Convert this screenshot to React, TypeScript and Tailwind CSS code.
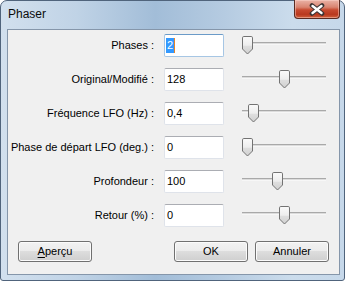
import React from "react";

const rows = [
  { label: "Phases :", value: "2", pos: 0, focused: true },
  { label: "Original/Modifié :", value: "128", pos: 37 },
  { label: "Fréquence LFO (Hz) :", value: "0,4", pos: 6 },
  { label: "Phase de départ LFO (deg.) :", value: "0", pos: 0 },
  { label: "Profondeur :", value: "100", pos: 30 },
  { label: "Retour (%) :", value: "0", pos: 37 },
];

function Thumb({ id }: { id: string }) {
  return (
    <svg width="11" height="19" viewBox="0 0 11 19">
      <defs>
        <linearGradient id={id} x1="0" x2="0" y1="0" y2="1">
          <stop offset="0" stopColor="#fbfbfb" />
          <stop offset="0.5" stopColor="#ededed" />
          <stop offset="0.56" stopColor="#dedede" />
          <stop offset="1" stopColor="#d0d0d0" />
        </linearGradient>
      </defs>
      <path
        d="M1.8 0.5 H9.2 Q10.5 0.5 10.5 1.8 V13 L5.5 18 L0.5 13 V1.8 Q0.5 0.5 1.8 0.5 Z"
        fill={`url(#${id})`}
        stroke="#737373"
      />
    </svg>
  );
}

function Slider({ pos, idx }: { pos: number; idx: number }) {
  return (
    <div className="relative w-[84px] h-[23px]">
      <div className="absolute left-0 right-0 top-[8px] h-[3px] border-t border-b border-t-[#a9a9a9] border-b-[#f7f7f7] bg-[#dcdcdc]" />
      <div className="absolute top-[2px]" style={{ left: pos }}>
        <Thumb id={`thumb-${idx}`} />
      </div>
    </div>
  );
}

function Button({ children }: { children: React.ReactNode }) {
  return (
    <div className="w-[74px] h-[21px] rounded-[3px] border border-[#707070] bg-[linear-gradient(to_bottom,#f2f2f2_0%,#ebebeb_50%,#dddddd_50%,#cfcfcf_100%)] shadow-[inset_0_0_0_1px_#fbfbfb] flex items-center justify-center text-[11px] text-black leading-none">
      {children}
    </div>
  );
}

export default function App() {
  return (
    <div className="w-[346px] h-[282px] bg-white font-['Liberation_Sans',Arial,sans-serif]">
      <div className="w-[345px] h-[281px] rounded-t-[7px] rounded-b-[3px] border border-[#50647c] bg-[linear-gradient(to_right,#d2e0ee_0%,#c0d3e6_22%,#a2bdd8_45%,#b5cbe1_65%,#cbdcec_85%,#c6d8ea_100%)] flex flex-col pl-[6px] pr-[4px] pb-[5px]">
        <div className="h-[28px] flex justify-between items-start">
          <span className="mt-[6px] ml-[1px] text-[12px] leading-[14px] text-[#0b0b0b]">Phaser</span>
          <div className="-mt-px w-[46px] h-[19px] rounded-b-[4px] border border-t-0 border-[#5a2b22] bg-[linear-gradient(to_bottom,#eab3a6_0%,#d98470_40%,#c74a30_55%,#b9391f_80%,#d0613d_100%)] shadow-[inset_0_0_0_1px_rgba(255,220,210,0.45)] flex items-center justify-center">
            <svg width="16" height="13" viewBox="0 0 16 13">
              <path d="M3 2.5 L13 10.5 M13 2.5 L3 10.5" stroke="#3d3434" strokeWidth="4.6" strokeLinecap="round" />
              <path d="M3.5 3 L12.5 10 M12.5 3 L3.5 10" stroke="#ffffff" strokeWidth="2.4" strokeLinecap="round" />
            </svg>
          </div>
        </div>
        <div className="flex-1 border border-[#8596aa] bg-[#f0f0f0] flex flex-col pt-[4px]">
          <div className="flex flex-col gap-[11px]">
            {rows.map((r, i) => (
              <div key={i} className="flex items-center h-[23px]">
                <div className="w-[146px] text-right text-[11px] text-black whitespace-nowrap">{r.label}</div>
                <div
                  className={
                    r.focused
                      ? "ml-[10px] w-[60px] h-[23px] rounded-[2px] border border-[#a6c6e4] border-t-[#6b9bc8] bg-white flex items-center pl-[1px] text-[11px] text-black"
                      : "ml-[10px] w-[60px] h-[23px] rounded-[2px] border border-[#dfe3ea] border-t-[#abadb3] bg-white flex items-center pl-[2px] text-[11px] text-black"
                  }
                >
                  {r.focused ? (
                    <span className="inline-block bg-[#3399ff] text-white px-[1px] leading-[15px] border-r border-r-[#e8842a]">{r.value}</span>
                  ) : (
                    r.value
                  )}
                </div>
                <div className="ml-[18px]">
                  <Slider pos={r.pos} idx={i} />
                </div>
              </div>
            ))}
          </div>
          <div className="mt-[14px] flex items-center justify-between pl-[10px] pr-[10px]">
            <Button>
              <span>
                <span className="underline underline-offset-2">A</span>perçu
              </span>
            </Button>
            <div className="flex gap-[7px]">
              <Button>OK</Button>
              <Button>Annuler</Button>
            </div>
          </div>
        </div>
      </div>
    </div>
  );
}
